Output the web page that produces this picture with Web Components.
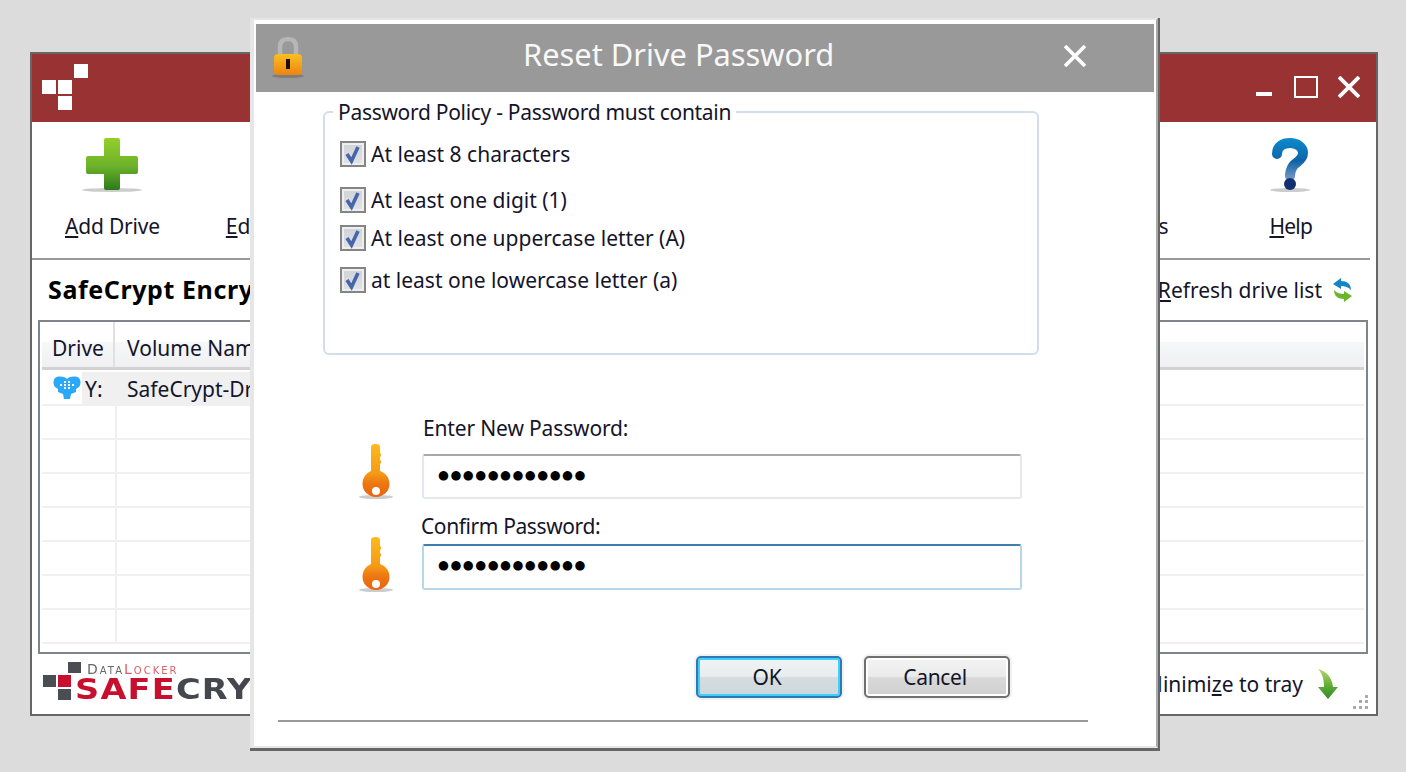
<!DOCTYPE html>
<html>
<head>
<meta charset="utf-8">
<title>Reset Drive Password</title>
<style>
  html, body { margin: 0; height: 100%; background: #dcdcdc; overflow: hidden; }
  body { font-family: "Noto Sans", "Liberation Sans", sans-serif; font-size: 21px; color: #14142a; }
</style>
</head>
<body>

<app-window>
  <tool-button style="margin-left:33px;letter-spacing:-.2px">
    <svg slot="icon" width="60" height="54" viewBox="0 0 60 54">
      <defs><linearGradient id="pg" x1="0" y1="0" x2="0" y2="1"><stop offset="0" stop-color="#93cf2b"/><stop offset=".55" stop-color="#6cb12a"/><stop offset="1" stop-color="#2b7a1e"/></linearGradient></defs>
      <ellipse cx="30" cy="52" rx="30" ry="2" fill="#ccc"/>
      <path d="M24 0h12a2 2 0 0 1 2 2v16h16a2 2 0 0 1 2 2v14a2 2 0 0 1-2 2H38v14a2 2 0 0 1-2 2H24a2 2 0 0 1-2-2V36H6a2 2 0 0 1-2-2V20a2 2 0 0 1 2-2h16V2a2 2 0 0 1 2-2z" fill="url(#pg)"/>
    </svg>
    <span><u>A</u>dd Drive</span>
  </tool-button>
  <tool-button style="margin-left:66px"><span><u>E</u>dit Drive</span></tool-button>
  <tool-button style="margin-left:auto"><span>Settings</span></tool-button>
  <tool-button style="margin-left:101px;margin-right:58px;letter-spacing:-.8px">
    <svg slot="icon" width="41" height="54" viewBox="0 0 41 54">
      <defs><linearGradient id="hg" gradientUnits="userSpaceOnUse" x1="0" y1="0" x2="0" y2="42"><stop offset="0" stop-color="#0a8ccc"/><stop offset=".55" stop-color="#0f62a8"/><stop offset="1" stop-color="#7f9cc4"/></linearGradient></defs>
      <ellipse cx="20" cy="52" rx="20" ry="2" fill="#ccc"/>
      <path d="M7 16C7 8 13 5 20 5C27 5 33 9 33 15C33 22 26 24 23 28C21 31 20 34 20 38" fill="none" stroke="url(#hg)" stroke-width="10" stroke-linecap="round"/>
      <circle cx="20" cy="46" r="6" fill="#12306f"/>
    </svg>
    <span><u>H</u>elp</span>
  </tool-button>
</app-window>

<reset-dialog></reset-dialog>

<script>
class AppWindow extends HTMLElement {
  constructor() {
    super();
    this.attachShadow({ mode: 'open' }).innerHTML = /*html*/ `
      <style>
        :host { position: absolute; left: 30px; top: 52px; width: 1348px; height: 664px; box-sizing: border-box;
                border: 2px solid #666; background: #fff; display: flex; flex-direction: column; }
        .title { height: 68px; background: #993333; flex: none; display: flex; align-items: center; position: relative; }
        .squares { margin-left: 10px; margin-top: -2px; display: grid; grid-template-columns: repeat(3, 14px); grid-auto-rows: 14px; gap: 2px; }
        .squares i { background: #fff; }
        .controls { margin-left: auto; margin-right: 16px; margin-top: -2px; display: flex; align-items: center; }
        .toolbar { height: 136px; flex: none; display: flex; border-bottom: 2px solid #999; margin-right: 6px; box-sizing: content-box; }
        .heading { height: 60px; flex: none; display: flex; align-items: center; padding: 0 23px 0 16px; }
        .heading b { font-size: 25px; letter-spacing: .6px; color: #000; font-weight: 700; white-space: nowrap; margin-top: -2px; }
        .heading .refresh { margin-left: auto; display: flex; align-items: center; gap: 10px; white-space: nowrap; }
        .foot { flex: 1; display: flex; align-items: center; padding: 0 38px 0 11px; position: relative; }
        .foot .tray { margin-left: auto; display: flex; align-items: center; gap: 15px; white-space: nowrap; }
        .grip { position: absolute; right: 6px; bottom: 4px; }
      </style>
      <div class="title">
        <div class="squares">
          <i style="visibility:hidden"></i><i style="visibility:hidden"></i><i></i>
          <i></i><i></i><i style="visibility:hidden"></i>
          <i style="visibility:hidden"></i><i></i><i style="visibility:hidden"></i>
        </div>
        <div class="controls">
          <svg style="margin-right:22px" width="16" height="24" viewBox="0 0 16 24"><rect y="17" width="16" height="4" fill="#fff"/></svg>
          <svg style="margin-right:20px" width="24" height="22" viewBox="0 0 24 22"><rect x="1" y="1" width="22" height="20" fill="none" stroke="#fff" stroke-width="2"/></svg>
          <svg width="22" height="22" viewBox="0 0 22 22"><path d="M1 1L21 21M21 1L1 21" stroke="#fff" stroke-width="3.8"/></svg>
        </div>
      </div>
      <div class="toolbar"><slot></slot></div>
      <div class="heading">
        <b>SafeCrypt Encrypted Drives</b>
        <div class="refresh"><span><u>R</u>efresh drive list</span>
          <svg width="21" height="26" viewBox="0 0 21 26">
            <path d="M9 1L1 7L9 12V9C13 9 16 10 19 13C19 7 15 4 9 4Z" fill="#1583c6"/>
            <path d="M12 25L20 19L12 14V17C8 17 5 16 2 13C2 19 6 22 12 22Z" fill="#6bb52d"/>
          </svg>
        </div>
      </div>
      <drive-table></drive-table>
      <div class="foot">
        <safe-logo></safe-logo>
        <div class="tray"><span>Minimi<u>z</u>e to tray</span>
          <svg width="20" height="30" viewBox="0 0 20 30">
            <defs><linearGradient id="ag" x1="0" y1="0" x2="0" y2="1"><stop offset="0" stop-color="#b4d96a"/><stop offset=".6" stop-color="#5aa832"/><stop offset="1" stop-color="#2c8a2a"/></linearGradient></defs>
            <path d="M0 0C8 2 14 8 15 18H20L10 30L0 18H6C6 10 4 4 0 0Z" fill="url(#ag)"/>
          </svg>
        </div>
        <svg class="grip" width="18" height="16" viewBox="0 0 18 16" fill="#aaa">
          <rect x="13" y="1" width="3" height="3"/><rect x="7" y="6" width="3" height="3"/><rect x="13" y="6" width="3" height="3"/>
          <rect x="1" y="12" width="3" height="3"/><rect x="7" y="12" width="3" height="3"/><rect x="13" y="12" width="3" height="3"/>
        </svg>
      </div>`;
  }
}

class ToolButton extends HTMLElement {
  constructor() {
    super();
    this.attachShadow({ mode: 'open' }).innerHTML = /*html*/ `
      <style>
        :host { display: flex; flex-direction: column; align-items: center; white-space: nowrap; }
        .icon { height: 54px; margin-top: 16px; margin-bottom: 19px; }
        .label { line-height: 30px; }
      </style>
      <div class="icon"><slot name="icon"></slot></div>
      <div class="label"><slot></slot></div>`;
  }
}

class DriveTable extends HTMLElement {
  constructor() {
    super();
    const shadow = this.attachShadow({ mode: 'open' });
    shadow.innerHTML = /*html*/ `
      <style>
        :host { display: block; flex: none; height: 334px; margin: 0 8px 0 6px; box-sizing: border-box;
                border: 2px solid #80858c; padding: 0 2px; overflow: hidden; background: #fff; }
        .row { display: grid; grid-template-columns: 75px 1fr; height: 34px; box-sizing: border-box; border-bottom: 2px solid #f0f0f0; }
        .row > div { white-space: nowrap; display: flex; align-items: center; }
        .row > div:first-child { border-right: 2px solid #f0f0f0; }
        .head { height: 48px; margin-bottom: 2px; border-bottom: 3px solid #d2d2d2;
                background: linear-gradient(#fff 0 20px, #f6f7f9 20px, #f0f0f2); }
        .head > div { padding-left: 10px; padding-top: 6px; box-sizing: border-box; }
        .head > div:first-child { border-right: 2px solid #e0e0e0; width: 73px; }
        .sel { background: linear-gradient(90deg, #fff 40px, #f0f0f0 40px, #f0f0f0 600px, #fff 600px); border-bottom-color: #f0f0f0; }
        .sel > div:first-child { border-right: 0; }
        .sel svg { margin-left: 11px; margin-right: 4px; }
        .sel .vol { padding-left: 10px; padding-top: 2px; }
        .sel span { padding-top: 2px; }
      </style>
      <div class="row head"><div>Drive</div><div>Volume Name</div></div>
      <div class="row sel">
        <div><svg width="28" height="24" viewBox="0 0 28 24">
          <path d="M14 3C11 0 5 0 2 2C0 4 0 9 2 11L5 13L5 16L10 18L11 23H17L18 18L23 16L23 13L26 11C28 9 28 4 26 2C23 0 17 0 14 3Z" fill="#29a9f7"/>
          <g fill="#fff"><rect x="7" y="8" width="2" height="2"/><rect x="11" y="8" width="2" height="2"/><rect x="15" y="8" width="2" height="2"/><rect x="19" y="8" width="2" height="2"/><rect x="11" y="5" width="2" height="2"/><rect x="15" y="5" width="2" height="2"/><rect x="11" y="11" width="2" height="2"/><rect x="15" y="11" width="2" height="2"/></g>
        </svg><span>Y:</span></div>
        <div class="vol">SafeCrypt-Drive</div>
      </div>`;
    for (let i = 0; i < 7; i++) {
      const row = document.createElement('div');
      row.className = 'row';
      row.innerHTML = '<div></div><div></div>';
      shadow.appendChild(row);
    }
  }
}

class SafeLogo extends HTMLElement {
  constructor() {
    super();
    this.attachShadow({ mode: 'open' }).innerHTML = /*html*/ `
      <style>
        :host { display: flex; align-items: flex-end; white-space: nowrap; filter: blur(.4px); margin-bottom: 6px; }
        .mark { display: grid; grid-template-columns: repeat(3, 13px); grid-auto-rows: 11.5px; gap: 2px; }
        .mark i { background: #4a4d52; }
        .words { display: flex; flex-direction: column; margin-left: -11px; }
        .small { font: 400 14px/10px "DejaVu Sans", sans-serif; font-variant: small-caps; color: #666; margin-left: 12px; letter-spacing: 2px; margin-bottom: 6px; }
        .small em { font-style: normal; color: #d8616a; }
        .big { font: 700 28px/20px "DejaVu Sans", sans-serif; color: #c8102e; letter-spacing: 1px; transform: scaleX(1.2); transform-origin: 0 50%; }
        .big em { font-style: normal; color: #44474d; }
      </style>
      <div class="mark">
        <i style="visibility:hidden"></i><i style="visibility:hidden"></i><i style="transform:translateX(-5px)"></i>
        <i></i><i style="background:#c8102e"></i><i style="visibility:hidden"></i>
        <i style="visibility:hidden"></i><i></i><i style="visibility:hidden"></i>
      </div>
      <div class="words">
        <span class="small">Data<em>Locker</em></span>
        <span class="big">SAFE<em>CRYPT</em></span>
      </div>`;
  }
}

class PolicyCheck extends HTMLElement {
  constructor() {
    super();
    this.attachShadow({ mode: 'open' }).innerHTML = /*html*/ `
      <style>
        :host { display: flex; align-items: center; gap: 5px; height: 30px; margin-left: 15px; white-space: nowrap; }
        .box { width: 26px; height: 26px; box-sizing: border-box; border: 2px solid #858585; background: linear-gradient(#cfd2d6, #e2e3e6); box-shadow: inset 0 0 0 2px #eee; }
        svg { display: block; }
      </style>
      <div class="box"><svg width="22" height="22" viewBox="0 0 22 22"><path d="M5 11L9.500 18L16 4" fill="none" stroke="#4566ad" stroke-width="3.6"/></svg></div>
      <slot></slot>`;
  }
}

class PassField extends HTMLElement {
  constructor() {
    super();
    const focused = this.hasAttribute('focused');
    const shift = this.getAttribute('key-shift') || 0;
    this.attachShadow({ mode: 'open' }).innerHTML = /*html*/ `
      <style>
        :host { display: grid; grid-template-columns: 64px 600px; margin-left: 102px; }
        label { grid-column: 2; line-height: 30px; white-space: nowrap; margin-left: var(--label-x, 1px); margin-bottom: var(--label-gap, 11px); letter-spacing: var(--label-sp, -.15px); }
        .key { grid-column: 1; grid-row: 1 / span 2; align-self: end; transform: translateY(${shift}px); display: block; }
        .input { grid-column: 2; height: var(--h, 45px); box-sizing: border-box; border-radius: 3px; display: flex; align-items: center; padding: 0 0 5px 14px;
                 border: 2px solid ${focused ? '#b8d6ea' : '#e4e8ec'}; border-top-color: ${focused ? '#3f7fae' : '#a8a8ac'};
                 font: 12.500px "DejaVu Sans", sans-serif; letter-spacing: 1.5px; color: #000; }
      </style>
      <label><slot></slot></label>
      <svg class="key" width="36" height="55" viewBox="0 0 36 55">
        <defs><linearGradient id="kg" x1="0" y1="0" x2="0" y2="1"><stop offset="0" stop-color="#fbbb1c"/><stop offset=".55" stop-color="#f59a16"/><stop offset=".75" stop-color="#ec7612"/><stop offset="1" stop-color="#e8650f"/></linearGradient></defs>
        <ellipse cx="18" cy="53" rx="17" ry="2" fill="#ccc"/>
        <path d="M13 3a4.500 3 0 0 1 9 0V9l1 1v2l-1 1v3l1 1v2l-1 1V27C28 29 31.500 34 31.500 40C31.500 47.500 25 53 18 53C11 53 4.500 47.500 4.500 40C4.500 34 8 29 13 27Z" fill="url(#kg)"/>
        <circle cx="18" cy="47" r="4" fill="#fff"/>
      </svg>
      <div class="input"><span>●●●●●●●●●●●●</span></div>`;
  }
}

class DlgButton extends HTMLElement {
  constructor() {
    super();
    const main = this.hasAttribute('default');
    this.attachShadow({ mode: 'open' }).innerHTML = /*html*/ `
      <style>
        :host { display: flex; align-items: center; justify-content: center; width: 146px; height: 42px; box-sizing: border-box; border-radius: 5px;
                border: 2px solid ${main ? '#2f78b4' : '#707070'}; letter-spacing: -.3px; padding-right: 4px;
                box-shadow: 0 0 0 2px #f2f2f2, inset 0 0 0 2px ${main ? '#3dd0fb' : '#fff'};
                background: ${main ? 'linear-gradient(#f0f3f3, #e9eded 48%, #d5dcdf 52%, #cfd7da)' : 'linear-gradient(#f3f3f3, #ebebeb 48%, #d9d9d9 52%, #cfcfcf)'}; }
      </style>
      <slot></slot>`;
  }
}

class ResetDialog extends HTMLElement {
  constructor() {
    super();
    this.attachShadow({ mode: 'open' }).innerHTML = /*html*/ `
      <style>
        :host { position: absolute; left: 250px; top: 18px; width: 910px; height: 733px; box-sizing: border-box; display: block; background: #fff;
                border-right: 2px solid #666; border-bottom: 3px solid #666; }
        .frame { height: 100%; box-sizing: border-box; border: 2px solid #e6e6e6; border-left-width: 4px; border-right-color: #aaa; padding: 4px 2px 0 2px; }
        .title { height: 68px; background: #999; display: flex; align-items: center; color: #f8f8f8; }
        .title svg.lock { margin-left: 16px; margin-top: -2px; flex: none; }
        .title h1 { margin: -8px 0 0 219px; font-size: 30.800px; font-weight: 400; white-space: nowrap; }
        .title svg.close { margin-left: auto; margin-right: 68px; margin-top: -4px; }
        fieldset { margin: 5px 0 0 67px; width: 716px; height: 258px; box-sizing: border-box; border: 2px solid #d2dfea; border-radius: 6px; padding: 0; min-inline-size: 0; }
        legend { margin-left: 8px; padding: 0 5px; line-height: 30px; white-space: nowrap; letter-spacing: -.3px; }
        .fields { margin-top: 58px; }
        .buttons { display: flex; gap: 22px; margin: 66px 0 0 440px; }
        hr { margin: 22px 0 0 22px; width: 810px; height: 2px; border: 0; background: #999; }
      </style>
      <div class="frame">
        <div class="title">
          <svg class="lock" width="32" height="42" viewBox="0 0 32 42">
            <defs><linearGradient id="lg" x1="0" y1="0" x2="0" y2="1"><stop offset="0" stop-color="#fbbf22"/><stop offset="1" stop-color="#ee8410"/></linearGradient></defs>
            <ellipse cx="16" cy="40" rx="16" ry="2" fill="#7d7d7d"/>
            <path d="M8 20V11C8 5 11 3 16 3C21 3 24 5 24 11V20" fill="none" stroke="#b6b6b6" stroke-width="4.500"/>
            <rect x="2" y="18" width="28" height="21" rx="4" fill="url(#lg)"/>
            <rect x="14" y="23" width="4" height="10" fill="#1a1000"/>
          </svg>
          <h1>Reset Drive Password</h1>
          <svg class="close" width="22" height="22" viewBox="0 0 22 22"><path d="M1 1L21 21M21 1L1 21" stroke="#fff" stroke-width="3.6"/></svg>
        </div>
        <fieldset>
          <legend>Password Policy - Password must contain</legend>
          <policy-check style="margin-top:12px">At least 8 characters</policy-check>
          <policy-check style="margin-top:16px">At least one digit (1)</policy-check>
          <policy-check style="margin-top:8px">At least one uppercase letter (A)</policy-check>
          <policy-check style="margin-top:12px">at least one lowercase letter (a)</policy-check>
        </fieldset>
        <div class="fields">
          <pass-field>Enter New Password:</pass-field>
          <pass-field focused key-shift="2" style="margin-top:12px;--label-x:-1px;--label-gap:3px;--h:46px;--label-sp:-.4px">Confirm Password:</pass-field>
        </div>
        <div class="buttons">
          <dlg-button default>OK</dlg-button>
          <dlg-button>Cancel</dlg-button>
        </div>
        <hr>
      </div>`;
  }
}

customElements.define('tool-button', ToolButton);
customElements.define('drive-table', DriveTable);
customElements.define('safe-logo', SafeLogo);
customElements.define('app-window', AppWindow);
customElements.define('policy-check', PolicyCheck);
customElements.define('pass-field', PassField);
customElements.define('dlg-button', DlgButton);
customElements.define('reset-dialog', ResetDialog);
</script>
</body>
</html>
